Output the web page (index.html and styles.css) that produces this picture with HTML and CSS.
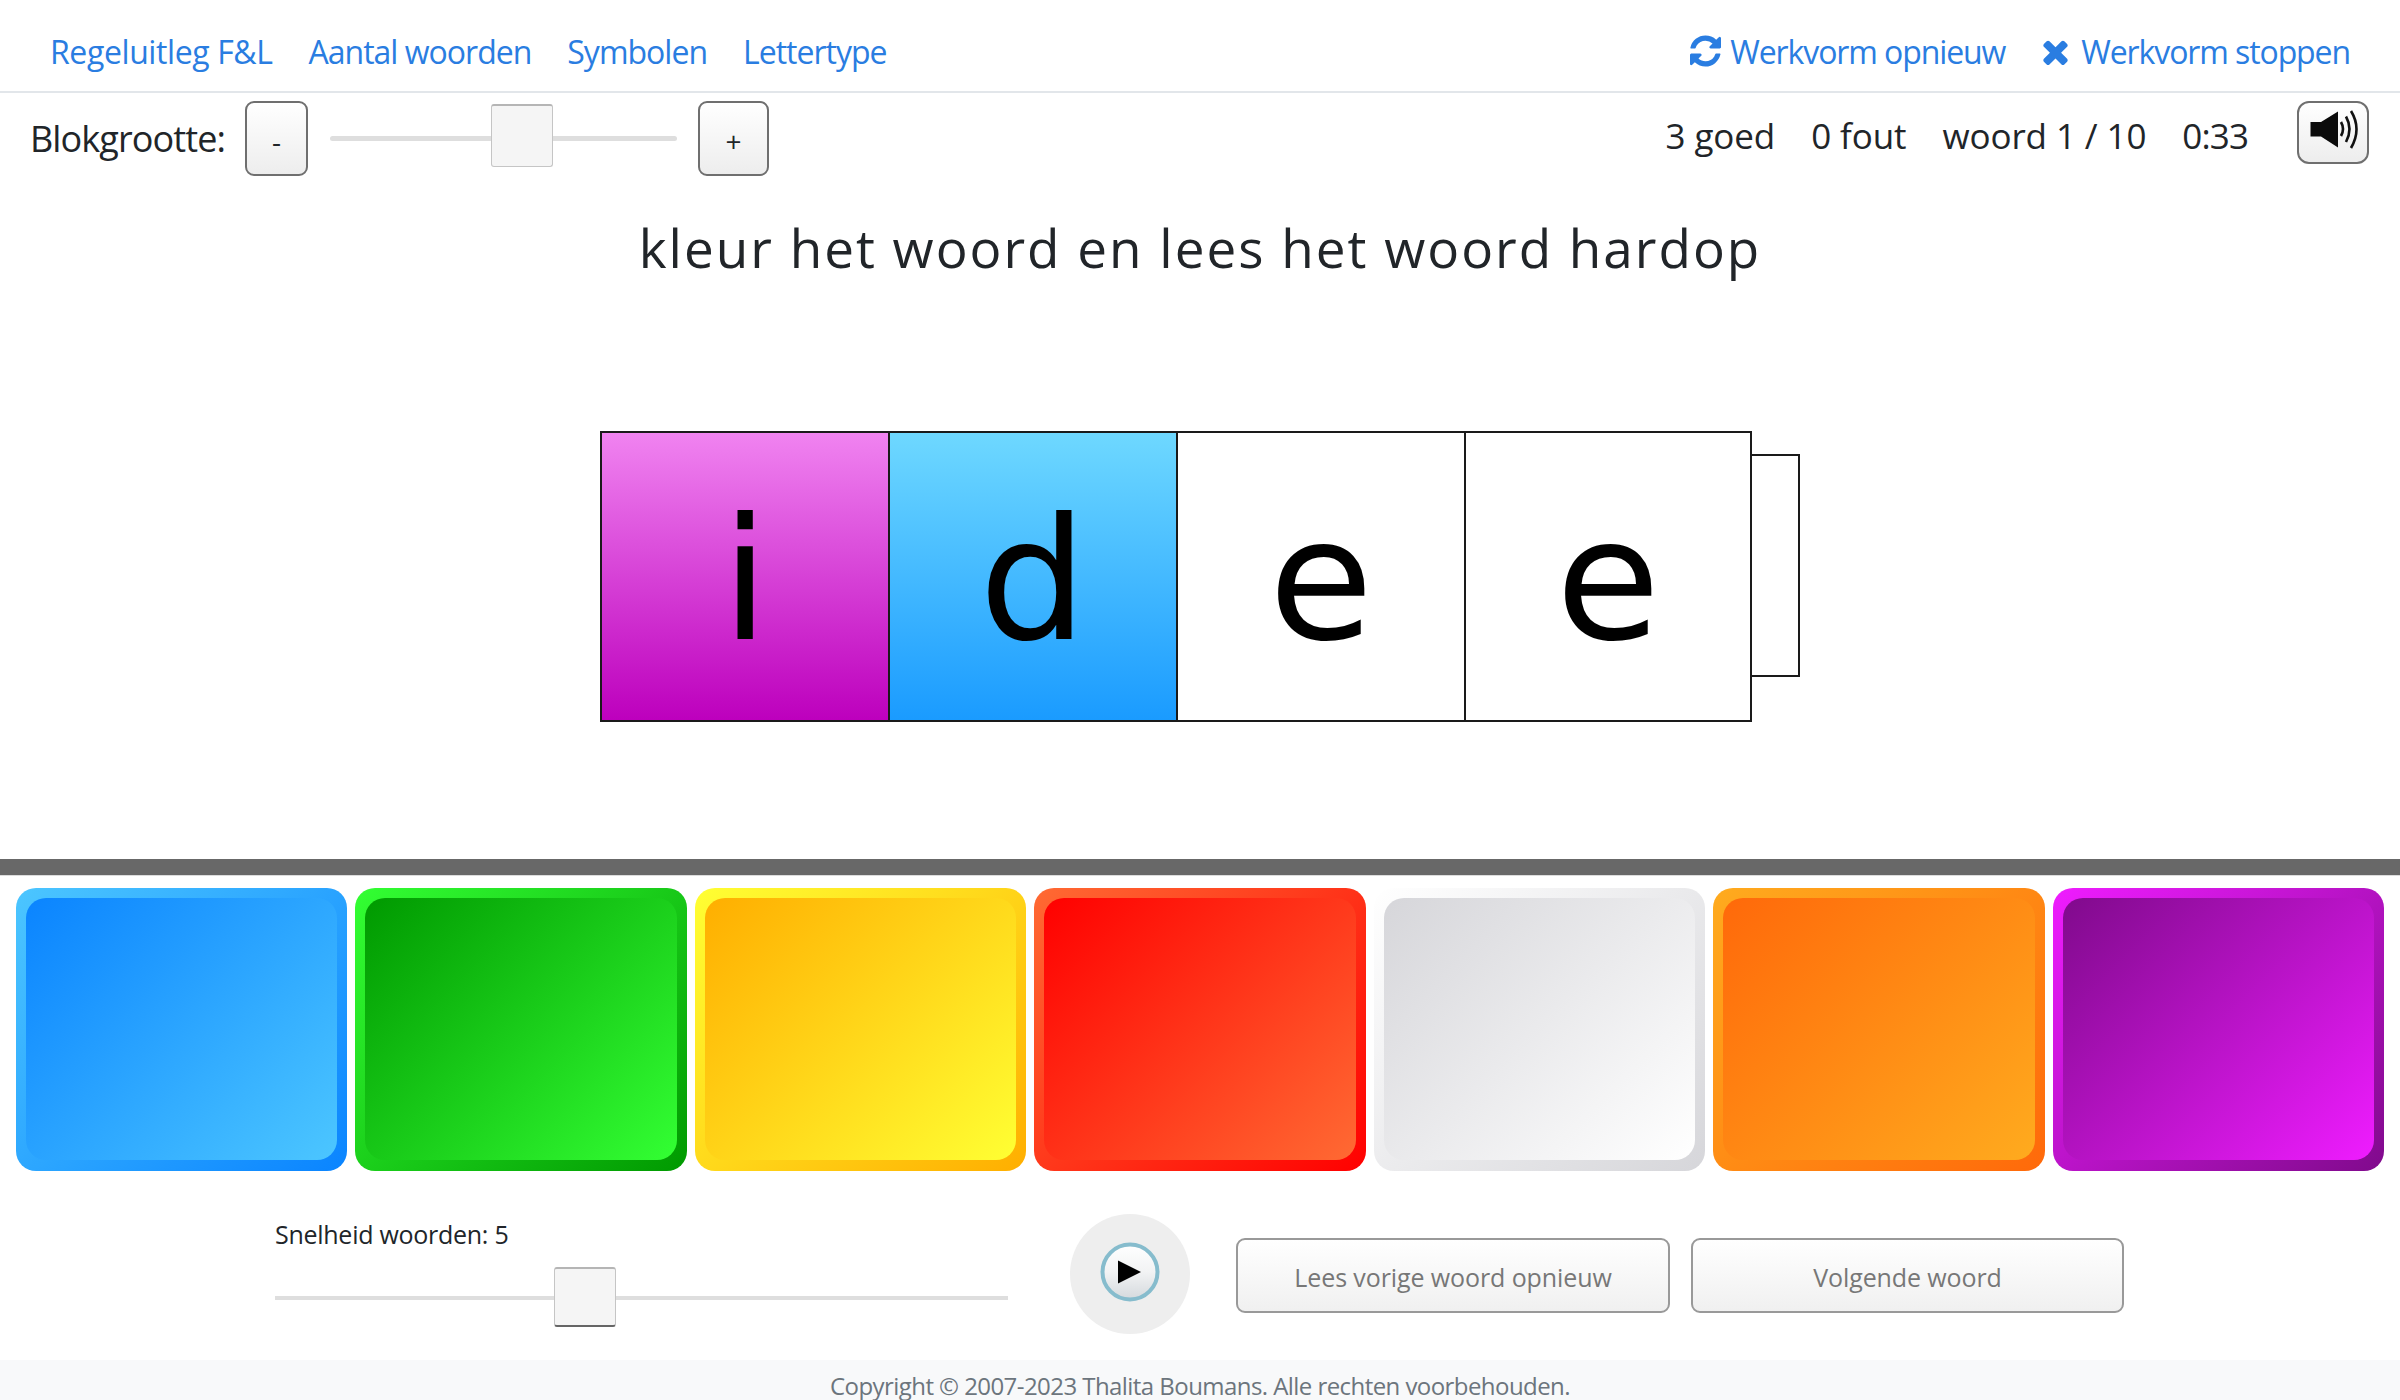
FILE: index.html
```html
<!DOCTYPE html>
<html lang="nl">
<head>
<meta charset="utf-8">
<title>Werkvorm</title>
<link rel="stylesheet" href="styles.css">
</head>
<body>
<nav class="topnav">
  <div class="links">
    <a href="#" class="link-wide">Regeluitleg F&amp;L</a>
    <a href="#">Aantal woorden</a>
    <a href="#">Symbolen</a>
    <a href="#">Lettertype</a>
  </div>
  <div class="links links-right">
    <a href="#" class="iconlink"><svg class="ic-refresh" viewBox="128 128 1536 1536"><path d="M1639 1056q0 5-1 7-64 268-268 434.5t-478 166.5q-146 0-282.5-55t-243.5-157l-129 129q-19 19-45 19t-45-19-19-45v-448q0-26 19-45t45-19h448q26 0 45 19t19 45-19 45l-137 137q71 66 161 102t187 36q134 0 250-65t186-179q11-17 53-117 8-23 30-23h192q13 0 22.5 9.5t9.5 22.5zm25-800v448q0 26-19 45t-45 19h-448q-26 0-45-19t-19-45 19-45l138-138q-148-137-349-137-134 0-250 65t-186 179q-11 17-53 117-8 23-30 23h-199q-13 0-22.5-9.5t-9.5-22.5v-7q65-268 270-434.5t480-166.5q146 0 284 55.5t245 156.5l130-129q19-19 45-19t45 19 19 45z"/></svg>Werkvorm opnieuw</a>
    <a href="#" class="iconlink"><svg class="ic-times" viewBox="302 238 1188 1316"><path d="M1490 1322q0 40-28 68l-136 136q-28 28-68 28t-68-28l-294-294-294 294q-28 28-68 28t-68-28l-136-136q-28-28-28-68t28-68l294-294-294-294q-28-28-28-68t28-68l136-136q28-28 68-28t68 28l294 294 294-294q28-28 68-28t68 28l136 136q28 28 28 68t-28 68l-294 294 294 294q28 28 28 68z"/></svg>Werkvorm stoppen</a>
  </div>
</nav>

<main class="work">
  <div class="toolbar">
    <div class="size-tools">
      <span class="size-label">Blokgrootte:</span>
      <button class="stepper stepper-minus">-</button>
      <div class="slider slider-size"><span class="thumb thumb-size"></span></div>
      <button class="stepper stepper-plus">+</button>
    </div>
    <div class="score">
      <span>3 goed</span>
      <span>0 fout</span>
      <span>woord 1 / 10</span>
      <span class="timer">0:33</span>
      <button class="sound" aria-label="geluid">
        <svg viewBox="2 2 68 59" class="ic-sound">
          <path class="sound-body" d="M13.5 21H24L41 10.500V46.500L24 35.500H13.500Z"/>
          <path class="sound-wave w1" d="M44 21Q48 28 44 35"/>
          <path class="sound-wave w2" d="M49 15.500Q56 28 49 41"/>
          <path class="sound-wave w3" d="M54 10Q65 28 54 47"/>
        </svg>
      </button>
    </div>
  </div>
  <h1 class="instruction">kleur het woord en lees het woord hardop</h1>
  <div class="stage">
    <div class="blocks">
      <div class="block block-pink">i</div>
      <div class="block block-blue">d</div>
      <div class="block">e</div>
      <div class="block block-last">e</div>
    </div>
    <div class="tail"></div>
  </div>
</main>

<div class="divider"></div>

<section class="palette">
  <button class="swatch sw-blue"><span></span></button>
  <button class="swatch sw-green"><span></span></button>
  <button class="swatch sw-yellow"><span></span></button>
  <button class="swatch sw-red"><span></span></button>
  <button class="swatch sw-white"><span></span></button>
  <button class="swatch sw-orange"><span></span></button>
  <button class="swatch sw-purple"><span></span></button>
</section>

<section class="controls">
  <div class="speed">
    <div class="speed-label">Snelheid woorden: 5</div>
    <div class="slider slider-speed"><span class="thumb thumb-speed"></span></div>
  </div>
  <button class="play" aria-label="afspelen">
    <svg viewBox="0 0 60 60" class="ic-play">
      <defs><linearGradient id="playfill" x1="0" y1="0" x2="0" y2="1"><stop offset="0" stop-color="#ffffff"/><stop offset="0.5" stop-color="#f2f3f4"/><stop offset="1" stop-color="#d4d9dd"/></linearGradient></defs>
      <circle cx="30" cy="30" r="27.500" fill="url(#playfill)" stroke="#86bccd" stroke-width="4"/>
      <path d="M18 18.500L41 30L18 41.500Z" fill="#000"/>
    </svg>
  </button>
  <button class="action action-prev">Lees vorige woord opnieuw</button>
  <button class="action action-next">Volgende woord</button>
</section>

<footer class="footer">Copyright © 2007-2023 Thalita Boumans. Alle rechten voorbehouden.</footer>
</body>
</html>
```
FILE: styles.css
```css
* { box-sizing: border-box; }
html, body { margin: 0; padding: 0; }
body {
  width: 2400px;
  height: 1400px;
  overflow: hidden;
  display: flex;
  flex-direction: column;
  background: #fff;
  color: #212529;
  font-family: "Open Sans", "Noto Sans", sans-serif;
}
button { font-family: inherit; padding: 0; cursor: pointer; }

.topnav {
  height: 93px;
  flex: none;
  display: flex;
  justify-content: space-between;
  align-items: center;
  padding: 21px 50px 10px;
  border-bottom: 2px solid #e2e6ea;
}
.links { display: flex; align-items: center; gap: 36px; }
.links a {
  color: #2a7de1;
  text-decoration: none;
  font-size: 32px;
  letter-spacing: -1px;
  white-space: nowrap;
  display: flex;
  align-items: center;
}
.links .link-wide { letter-spacing: -0.4px; }
.links-right { gap: 37px; }
.links-right a { letter-spacing: -1.1px; }
.ic-refresh { width: 31px; height: 32px; margin-right: 9px; fill: #2a7de1; }
.ic-times { width: 27px; height: 27px; margin-right: 12px; fill: #2a7de1; }

.work { height: 766px; flex: none; display: flex; flex-direction: column; }
.toolbar {
  display: flex;
  justify-content: space-between;
  padding: 8px 31px 0 30px;
}
.size-tools { display: flex; align-items: flex-start; }
.size-label {
  font-size: 36px;
  letter-spacing: -0.9px;
  line-height: 75px;
  width: 215px;
  white-space: nowrap;
}
.stepper {
  height: 75px;
  padding-top: 4px;
  border: 2px solid #6f6f6f;
  border-radius: 9px;
  background: linear-gradient(#ffffff, #ededed);
  font-size: 28px;
  color: #212529;
  line-height: 1;
}
.stepper-minus { width: 63px; }
.stepper-plus { width: 71px; margin-left: 21px; }

.slider { position: relative; background: #dedede; }
.slider-size { width: 347px; height: 5px; margin: 35px 0 0 22px; border-radius: 3px; }
.thumb {
  position: absolute;
  display: block;
  background: #f5f5f5;
  border: 1px solid #c5c5c5;
  border-radius: 3px;
}
.thumb-size { left: 161px; top: -32px; width: 62px; height: 63px; border-top: 2px solid #b5b5b5; }

.score { display: flex; align-items: flex-start; font-size: 35px; letter-spacing: -0.1px; }
.score span { line-height: 70px; margin-left: 36px; white-space: nowrap; }
.score .timer { letter-spacing: -0.9px; }
.sound {
  width: 72px;
  height: 63px;
  margin-left: 49px;
  border: 2px solid #6f6f6f;
  border-radius: 12px;
  background: linear-gradient(#ffffff, #ededed);
  display: block;
  overflow: hidden;
}
.ic-sound { display: block; width: 68px; height: 59px; filter: blur(0.5px); }
.sound-body { fill: #0b0b0b; }
.sound-wave { fill: none; stroke: #111; stroke-width: 2.6; }

.instruction {
  margin: 0;
  font-weight: 400;
  font-size: 53px;
  letter-spacing: 2px;
  line-height: 80px;
  text-align: center;
  padding-top: 32px;
}
.stage { display: flex; justify-content: center; align-items: flex-start; margin-top: 143px; height: 291px; }
.blocks { display: flex; height: 291px; }
.block {
  width: 290px;
  height: 291px;
  margin-right: -2px;
  border: 2px solid #1a1a1a;
  background: #fff;
  color: #000;
  font-family: "DejaVu Sans", sans-serif;
  font-size: 170px;
  line-height: 295px;
  text-align: center;
}
.block-last { width: 288px; }
.block-pink { background: linear-gradient(#f083f0, #bd00bd); }
.block-blue { background: linear-gradient(#6ed8ff, #1a9bff); }
.tail {
  width: 48px;
  height: 223px;
  margin-left: 2px;
  margin-top: 23px;
  border: 2px solid #1a1a1a;
  border-left: none;
}

.divider {
  height: 17px;
  flex: none;
  background: #686868;
  border-bottom: 1px solid #dcdcdc;
}

.palette {
  flex: none;
  height: 296px;
  padding: 12px 16px 1px;
  display: grid;
  grid-template-columns: repeat(7, 1fr);
  gap: 8.3px;
}
.swatch {
  border: none;
  border-radius: 20px;
  padding: 10px 10px 11px;
  background: linear-gradient(135deg, var(--light), var(--dark));
}
.swatch span {
  display: block;
  width: 100%;
  height: 100%;
  border-radius: 20px;
  background: linear-gradient(135deg, var(--dark), var(--light));
}
.sw-blue { --light: #4cc6ff; --dark: #0a84ff; }
.sw-green { --light: #33ff33; --dark: #009900; }
.sw-yellow { --light: #ffff33; --dark: #ffae00; }
.sw-red { --light: #ff6a33; --dark: #ff0000; }
.sw-white { --light: #ffffff; --dark: #d6d6da; }
.sw-orange { --light: #ffab1e; --dark: #ff690a; }
.sw-purple { --light: #ef1cff; --dark: #800a8c; }

.controls {
  flex: none;
  height: 188px;
  display: flex;
  align-items: flex-start;
  padding-left: 275px;
}
.speed { width: 733px; }
.speed-label { font-size: 25px; letter-spacing: -0.27px; line-height: 34px; margin-top: 45px; }
.slider-speed { width: 733px; height: 4px; margin-top: 45px; }
.thumb-speed { left: 279px; top: -29px; width: 62px; height: 60px; border-bottom: 2px solid #666; border-top: 2px solid #b5b5b5; }
.play {
  width: 120px;
  height: 120px;
  margin: 42px 46px 0 62px;
  border: none;
  border-radius: 50%;
  background: #eeeeee;
  display: flex;
  justify-content: center;
  align-items: flex-start;
  flex: none;
}
.ic-play { width: 60px; height: 60px; margin-top: 28px; filter: blur(0.4px); }
.action {
  height: 75px;
  margin-top: 66px;
  padding-top: 2px;
  border: 2px solid #999;
  border-radius: 9px;
  background: linear-gradient(#ffffff, #f0f0f0);
  color: #777;
  font-size: 25px;
  letter-spacing: -0.1px;
  flex: none;
}
.action-prev { width: 434px; }
.action-next { width: 433px; margin-left: 21px; }

.footer {
  flex: 1;
  background: #f8f9fa;
  color: #6c757d;
  font-size: 24px;
  letter-spacing: -0.56px;
  text-align: center;
  line-height: 52px;
  white-space: nowrap;
}
```
